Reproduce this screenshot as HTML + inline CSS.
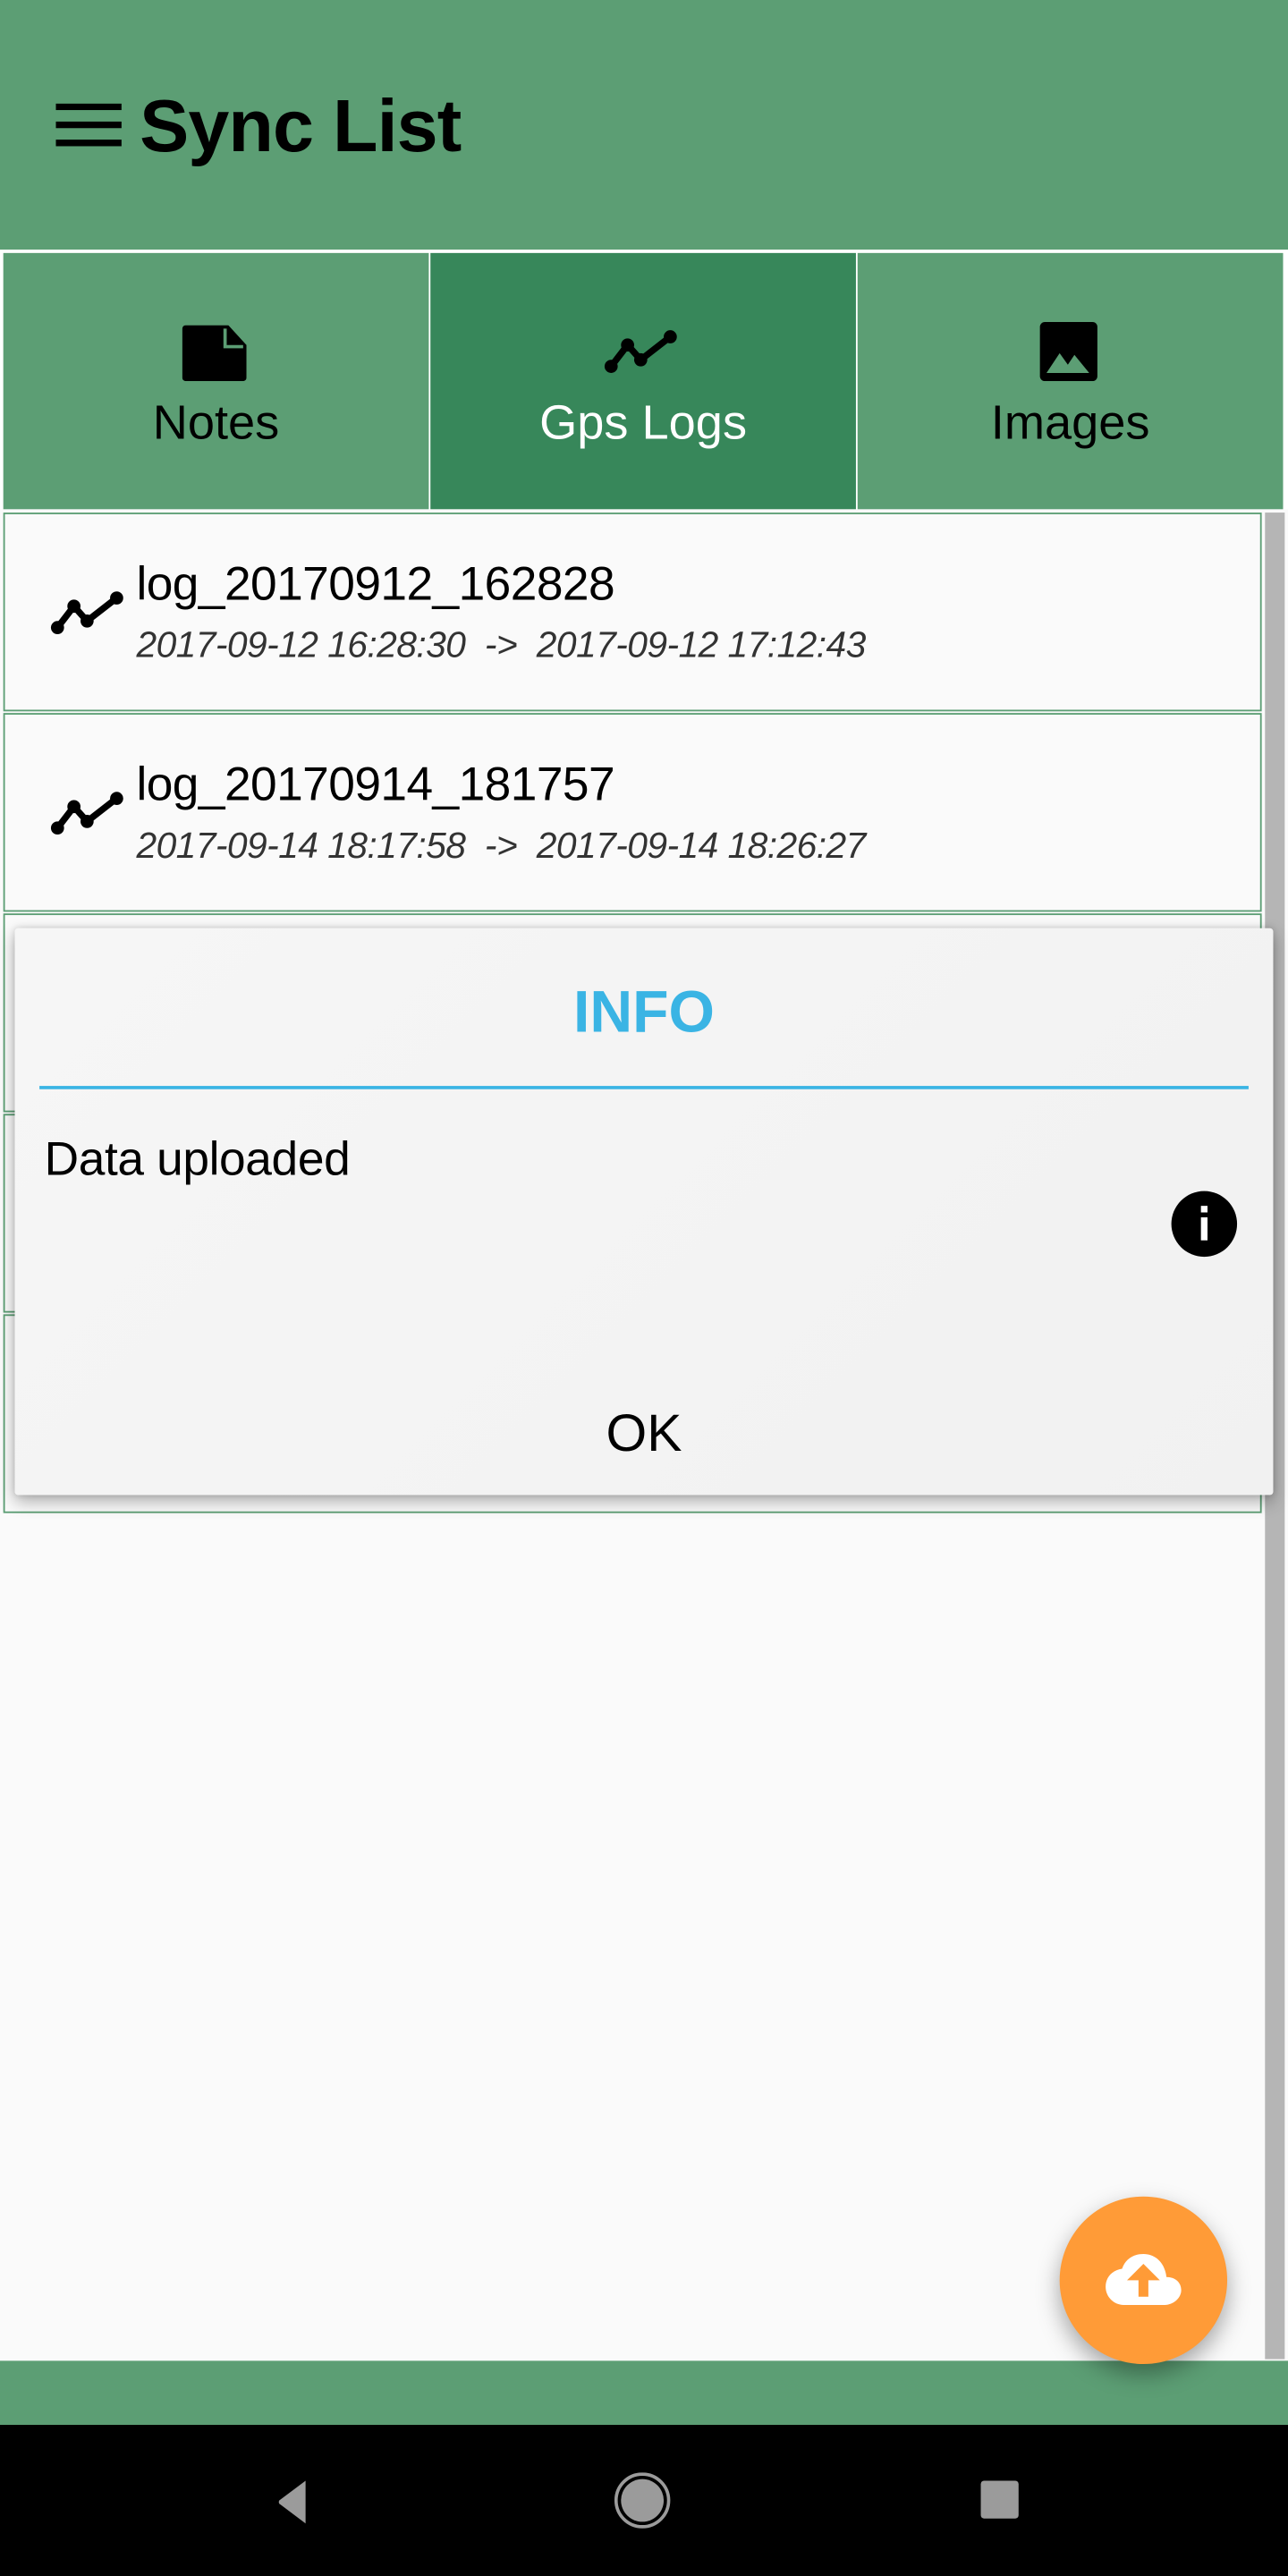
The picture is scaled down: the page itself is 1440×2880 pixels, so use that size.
<!DOCTYPE html>
<html><head><meta charset="utf-8">
<style>
html,body{margin:0;padding:0;width:1440px;height:2880px;overflow:hidden;background:#fafafa}
#w{position:absolute;left:0;top:0;width:784px;height:1568px;transform:scale(1.836735);transform-origin:0 0;font-family:"Liberation Sans",sans-serif;background:#fafafa}
.a{position:absolute}
.hdr{left:0;top:0;width:784px;height:152px;background:#5c9e74}
.tab{top:154px;height:156px;width:259px;background:#5c9e74}
.lbl{position:absolute;width:259px;text-align:center;top:87px;font-size:29.5px;color:#000}
.item{left:2px;width:766px;height:121px;border:1px solid #5c9e74;box-sizing:border-box;background:#fafafa}
.t{position:absolute;left:80px;top:27px;font-size:29px;color:#000;letter-spacing:-0.3px}
.d{position:absolute;left:80px;top:67px;font-size:22.2px;font-style:italic;color:#333;letter-spacing:-0.3px}
.ic{position:absolute;left:27px;top:46px}
</style></head><body><div id="w">
<div class="a hdr"></div>
<svg class="a" style="left:34px;top:63px" width="40" height="26"><rect x="0" y="0" width="40" height="4" fill="#000"/><rect x="0" y="11" width="40" height="4" fill="#000"/><rect x="0" y="22" width="40" height="4" fill="#000"/></svg>
<div class="a" style="left:85px;top:51px;font-size:45px;font-weight:bold;color:#000;letter-spacing:-0.5px">Sync List</div>
<div class="a" style="left:0;top:152px;width:784px;height:160px;background:#fff"></div>
<div class="a tab" style="left:2px"><svg class="a" style="left:108px;top:44px" width="42" height="34"><path d="M3 0h26l11 12v20a2 2 0 0 1-2 2H3a2 2 0 0 1-2-2V2a2 2 0 0 1 2-2z" fill="#000"/><path d="M27 2v11h11" fill="none" stroke="#5c9e74" stroke-width="2"/></svg><div class="lbl">Notes</div></div>
<div class="a tab" style="left:262px;background:#37875a"><svg class="a" style="left:105px;top:46px" width="48" height="28"><path d="M5 23L15 10L23 19L41 5" fill="none" stroke="#000" stroke-width="4"/><circle cx="5" cy="23" r="4"/><circle cx="15" cy="10" r="4"/><circle cx="23" cy="19" r="4"/><circle cx="41" cy="5" r="4"/></svg><div class="lbl" style="color:#fff">Gps Logs</div></div>
<div class="a tab" style="left:522px"><svg class="a" style="left:110px;top:42px" width="36" height="36"><rect x="1" y="0" width="35" height="36" rx="3" fill="#000"/><path d="M5 31l8-12l5 7l4-6l9 11z" fill="#5c9e74"/></svg><div class="lbl">Images</div></div>
<div class="a" style="left:0;top:310px;width:784px;height:1127px;background:#fafafa"></div>
<div class="a item" style="top:312px"><svg class="ic" width="48" height="28"><path d="M5 23L15 10L23 19L41 5" fill="none" stroke="#000" stroke-width="4"/><circle cx="5" cy="23" r="4"/><circle cx="15" cy="10" r="4"/><circle cx="23" cy="19" r="4"/><circle cx="41" cy="5" r="4"/></svg><div class="t">log_20170912_162828</div><div class="d">2017-09-12 16:28:30&nbsp; -&gt;&nbsp; 2017-09-12 17:12:43</div></div>
<div class="a item" style="top:434px"><svg class="ic" width="48" height="28"><path d="M5 23L15 10L23 19L41 5" fill="none" stroke="#000" stroke-width="4"/><circle cx="5" cy="23" r="4"/><circle cx="15" cy="10" r="4"/><circle cx="23" cy="19" r="4"/><circle cx="41" cy="5" r="4"/></svg><div class="t">log_20170914_181757</div><div class="d">2017-09-14 18:17:58&nbsp; -&gt;&nbsp; 2017-09-14 18:26:27</div></div>
<div class="a item" style="top:556px"></div>
<div class="a item" style="top:678px"></div>
<div class="a item" style="top:800px;height:121px"></div>
<div class="a" style="left:770px;top:312px;width:12px;height:1124px;background:#b5b5b5"></div>
<div class="a" style="left:9px;top:565px;width:766px;height:345px;background:linear-gradient(135deg,#f6f6f6,#f1f1f1);box-shadow:0 4px 10px rgba(0,0,0,0.3),0 0 4px rgba(0,0,0,0.15);border-radius:2px">
<div class="a" style="left:0;width:766px;top:30px;text-align:center;font-size:36px;font-weight:bold;color:#3ab4e4">INFO</div>
<div class="a" style="left:15px;top:96px;width:736px;height:2px;background:#3ab4e4"></div>
<div class="a" style="left:18px;top:125px;font-size:29px;color:#000;letter-spacing:-0.2px">Data uploaded</div>
<svg class="a" style="left:703px;top:159px" width="42" height="42"><circle cx="21" cy="21" r="20" fill="#000"/><rect x="19" y="17" width="4" height="14" fill="#fff"/><rect x="19" y="10" width="4" height="4" fill="#fff"/></svg>
<div class="a" style="left:0;width:766px;top:289px;text-align:center;font-size:32px;color:#000">OK</div>
</div>
<div class="a" style="left:0;top:1437px;width:784px;height:39px;background:#5c9e74"></div>
<div class="a" style="left:645px;top:1337px;width:102px;height:102px;border-radius:50%;background:#ff9b37;box-shadow:0 6px 14px rgba(0,0,0,0.35)"></div>
<svg class="a" style="left:672px;top:1368px" width="48" height="40"><path d="M38 18C37 9 31 4 24 4c-6 0-11 3-13 9C5 14 1 18 1 24c0 6 5 11 11 11h25c5 0 10-4 10-9 0-5-4-8-9-8z" fill="#fff"/><path d="M24 10l-10 10h7v10h6V20h7z" fill="#ff9b37"/></svg>
<div class="a" style="left:0;top:1476px;width:784px;height:92px;background:#000"></div>
<svg class="a" style="left:160px;top:1505px" width="470" height="36"><path d="M26 5v26L10 19a2 2 0 0 1 0-2z" fill="#9b9b9b"/><circle cx="231" cy="17" r="16" fill="none" stroke="#9b9b9b" stroke-width="2"/><circle cx="231" cy="17" r="13" fill="#9b9b9b"/><rect x="437" y="5" width="23" height="23" rx="2" fill="#9b9b9b"/></svg>
</div></body></html>
